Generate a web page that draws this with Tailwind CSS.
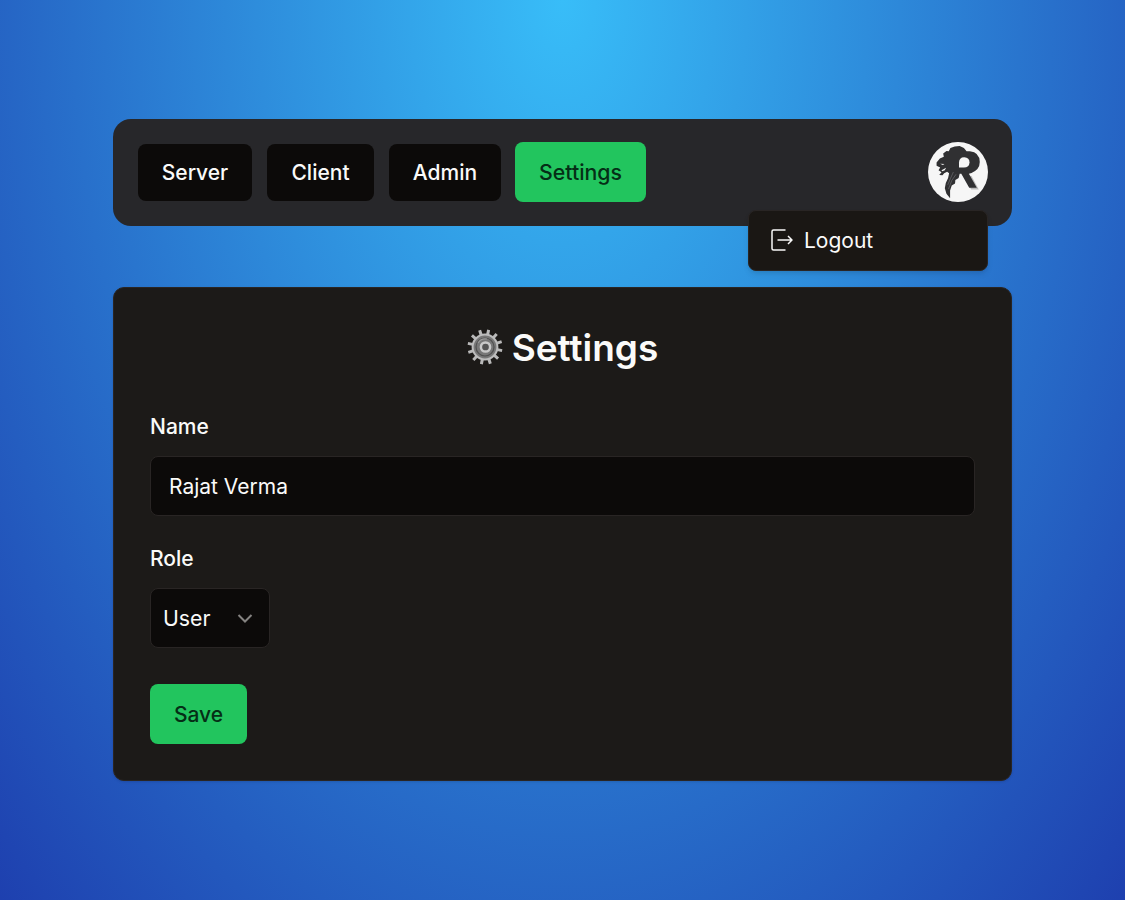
<!DOCTYPE html>
<html lang="en">
<head>
<meta charset="utf-8">
<title>Settings</title>
<script src="https://cdn.jsdelivr.net/npm/@tailwindcss/browser@4"></script>
</head>
<body class="h-[900px] overflow-hidden bg-[radial-gradient(ellipse_at_top,#38bdf8,#1e40af)] font-[Inter,sans-serif] text-[21px] leading-[30px] text-[#fafaf9]">
<main class="flex flex-col gap-[61px] pt-[119px] pl-[113px]">
  <nav class="flex h-[107px] w-[899px] items-center justify-between rounded-[18px] bg-[#27272a] pr-6 pb-px pl-[25px]">
    <div class="flex items-center font-medium">
      <a class="flex h-[57px] w-[114px] items-center justify-center rounded-lg bg-[#0c0a09] pt-0.5">Server</a>
      <a class="ml-[15px] flex h-[57px] w-[107px] items-center justify-center rounded-lg bg-[#0c0a09] pt-0.5">Client</a>
      <a class="ml-[15px] flex h-[57px] w-[112px] items-center justify-center rounded-lg bg-[#0c0a09] pt-0.5">Admin</a>
      <a class="ml-[14px] flex h-[60px] w-[131px] items-center justify-center rounded-lg bg-[#22c55e] text-[21.3px] text-[#052e16]">Settings</a>
    </div>
    <div class="relative size-[60px]">
      <svg class="size-[60px]" viewBox="24 21 182 182">
        <circle cx="115" cy="112" r="91" fill="#f6f6f6"/>
        <path d="M128 118 155 165H178L156 124" fill="#b9b9b9"/>
        <g fill="#303032">
          <path d="M50 83 60 71 72 66 70 56 80 48 87 49 92 39 105 35 120 33 133 39 141 49 151 49Q181 52 181 82Q181 105 156 115L148 117 172 160H149L125 117 120 117 117 130 107 136 106 147 96 153 91 168 91 192 80 178 75 161 78 145 85 130 88 116 82 111 73 116 68 122 58 121 65 113 56 107 61 98 50 93Z"/>
        </g>
        <path d="M118 98V84Q118 67 134 67Q150 68 150 83Q149 98 133 98Z" fill="#f6f6f6"/>
        <path d="M61 87 74 88 69 91Z M65 107 79 99 75 107 67 110Z" fill="#f6f6f6"/>
        <path d="M101 112 92 132 84 151M109 119 96 138 86 164" fill="none" stroke="#77777a" stroke-width="1.8"/>
      </svg>
      <div class="absolute top-[68px] right-0 z-10 flex h-[61px] w-[240px] items-center gap-[11px] rounded-lg border border-[#292524] bg-[#1a1714] pb-px pl-[21px] shadow-md">
        <svg class="size-[24px]" viewBox="0 0 24 24" fill="none" stroke="#fafaf9" stroke-width="1.5" stroke-linejoin="round"><path d="M15.5 2H3.5Q2 2 2 3.5V20.5Q2 22 3.5 22H15.5M7.5 12H22M18 8 22 12 18 16"/></svg>
        <span class="-ml-px pt-0.5">Logout</span>
      </div>
    </div>
  </nav>
  <section class="flex h-[494px] w-[899px] flex-col items-start rounded-[11px] border border-[#292524] bg-[#1c1a18] px-9 pt-[36px] shadow-sm">
    <h1 class="flex h-12 items-center gap-[9px] self-center text-[37px] font-semibold">
      <svg class="relative -top-px size-[36px]" viewBox="0 0 36 36">
        <g stroke="#b9b9b9" stroke-width="3">
          <path d="M18 .5V35.5M.5 18H35.5M9.3 2.8 26.7 33.2M2.8 9.3 33.2 26.7M2.8 26.7 33.2 9.3M9.3 33.2 26.7 2.8" transform="rotate(12 18 18)"/>
        </g>
        <circle cx="18" cy="18" r="12.4" fill="#777" stroke="#bcbcbc" stroke-width="2"/>
        <circle cx="18" cy="18" r="9" fill="#777" stroke="#505050" stroke-width="1.2"/>
        <path d="M11 14Q14 9 20 10" stroke="#999" fill="none" stroke-width="1.2"/>
        <circle cx="18.5" cy="18" r="4.6" fill="#555" stroke="#c9c9c9" stroke-width="2.5"/>
      </svg>
      <span>Settings</span>
    </h1>
    <label class="mt-[40px] h-[30px] font-medium">Name</label>
    <div class="mt-[14px] flex h-[60px] w-[825px] items-center rounded-lg border border-[#292524] bg-[#0c0a09] pt-0.5 pl-[18px]">Rajat Verma</div>
    <label class="mt-[28px] h-[30px] font-medium">Role</label>
    <div class="mt-[14px] flex h-[60px] w-[120px] items-center justify-between rounded-lg border border-[#292524] bg-[#0c0a09] pr-4 pl-3">
      <span class="text-[21.3px]">User</span>
      <svg class="h-4 w-4" viewBox="0 0 16 16" fill="none" stroke="#858381" stroke-width="2"><path d="m1.5 5 6.5 6.5L14.5 5"/></svg>
    </div>
    <button class="mt-[36px] h-[60px] w-[97px] rounded-lg bg-[#22c55e] pt-0.5 font-medium text-[#052e16]">Save</button>
  </section>
</main>
</body>
</html>
